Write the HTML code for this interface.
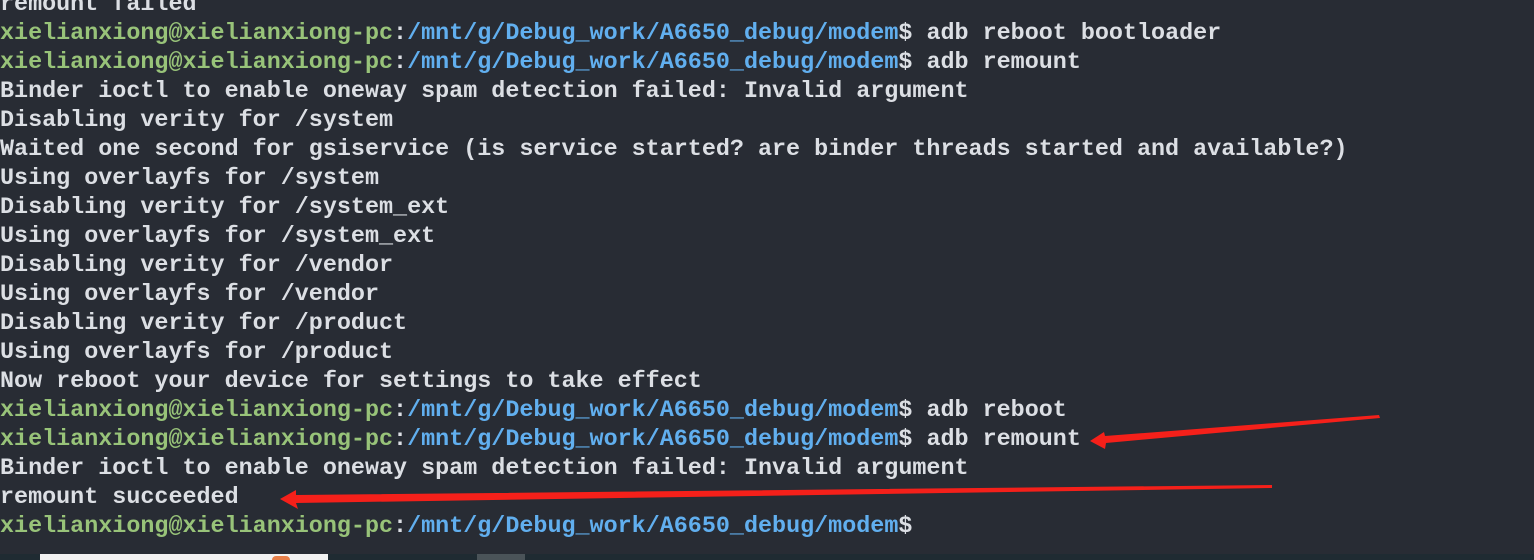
<!DOCTYPE html>
<html><head><meta charset="utf-8"><style>
html,body{margin:0;padding:0;width:1534px;height:560px;overflow:hidden;background:#282c34;}
pre{margin:0;position:absolute;left:0;top:-9px;font-family:"Liberation Mono",monospace;font-weight:bold;font-size:23.4px;line-height:29px;color:#dcdfe4;white-space:pre;}
.g{color:#98c379}.b{color:#61afef}
.bar{position:absolute;left:0;top:554px;width:1534px;height:6px;background:#1f2b32}
</style></head><body>
<pre>remount failed
<span class="g">xielianxiong@xielianxiong-pc</span>:<span class="b">/mnt/g/Debug_work/A6650_debug/modem</span>$ adb reboot bootloader
<span class="g">xielianxiong@xielianxiong-pc</span>:<span class="b">/mnt/g/Debug_work/A6650_debug/modem</span>$ adb remount
Binder ioctl to enable oneway spam detection failed: Invalid argument
Disabling verity for /system
Waited one second for gsiservice (is service started? are binder threads started and available?)
Using overlayfs for /system
Disabling verity for /system_ext
Using overlayfs for /system_ext
Disabling verity for /vendor
Using overlayfs for /vendor
Disabling verity for /product
Using overlayfs for /product
Now reboot your device for settings to take effect
<span class="g">xielianxiong@xielianxiong-pc</span>:<span class="b">/mnt/g/Debug_work/A6650_debug/modem</span>$ adb reboot
<span class="g">xielianxiong@xielianxiong-pc</span>:<span class="b">/mnt/g/Debug_work/A6650_debug/modem</span>$ adb remount
Binder ioctl to enable oneway spam detection failed: Invalid argument
remount succeeded
<span class="g">xielianxiong@xielianxiong-pc</span>:<span class="b">/mnt/g/Debug_work/A6650_debug/modem</span>$</pre>
<svg width="1534" height="560" style="position:absolute;left:0;top:0">
<polygon points="1379,415 1380,418 1106,443 1105,449 1090,441 1104,432 1105,436" fill="#f5201a"/>
<polygon points="1272,485 1272,488 296,503 298,509 280,499 296,490 296,495" fill="#f5201a"/>
</svg>
<div class="bar"></div>
<div style="position:absolute;left:40px;top:554px;width:288px;height:6px;background:#f2f2f2"></div>
<div style="position:absolute;left:272px;top:556px;width:18px;height:4px;background:#e8804a;border-radius:9px 9px 0 0"></div>
<div style="position:absolute;left:477px;top:554px;width:48px;height:6px;background:#4a5358"></div>
</body></html>
